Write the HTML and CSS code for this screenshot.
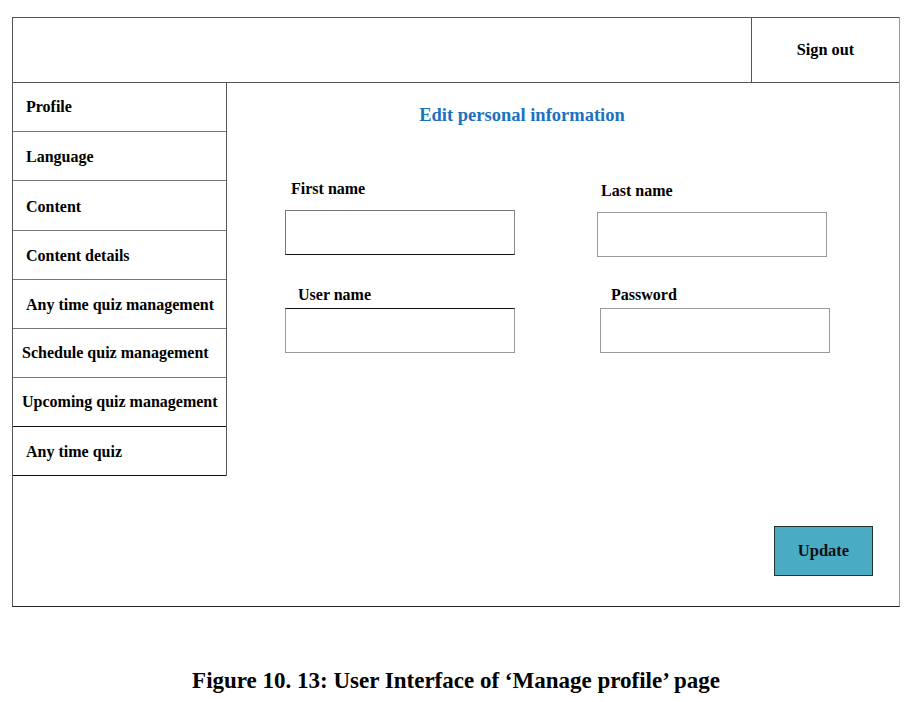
FILE: index.html
```html
<!DOCTYPE html>
<html>
<head>
<meta charset="utf-8">
<link rel="stylesheet" href="styles.css">
</head>
<body>
<div class="frame">
  <div class="header">
    <div class="header-space"></div>
    <div class="signout">Sign out</div>
  </div>
  <div class="body">
    <nav class="sidebar">
      <div class="nav-item first">Profile</div>
      <div class="nav-item">Language</div>
      <div class="nav-item tall">Content</div>
      <div class="nav-item">Content details</div>
      <div class="nav-item">Any time quiz management</div>
      <div class="nav-item tight">Schedule quiz management</div>
      <div class="nav-item tight dark">Upcoming quiz management</div>
      <div class="nav-item dark">Any time quiz</div>
    </nav>
    <main class="content">
      <h1 class="title">Edit personal information</h1>
      <div class="form">
        <div class="field">
          <label class="label">First name</label>
          <div class="input dark-border"></div>
        </div>
        <div class="field shift">
          <label class="label">Last name</label>
          <div class="input"></div>
        </div>
        <div class="field row2">
          <label class="label indent">User name</label>
          <div class="input dark-top"></div>
        </div>
        <div class="field row2 right2">
          <label class="label indent">Password</label>
          <div class="input"></div>
        </div>
      </div>
      <div class="actions">
        <button class="update">Update</button>
      </div>
    </main>
  </div>
</div>
<p class="caption">Figure 10. 13: User Interface of ‘Manage profile’ page</p>
</body>
</html>
```

FILE: styles.css
```css
* { box-sizing: border-box; }
html, body { background: #fff; }
body {
  margin: 0;
  padding: 17px 0 0 12px;
  font-family: "Liberation Serif", "Times New Roman", serif;
  color: #000;
}
.frame {
  width: 888px;
  height: 590px;
  border: 1px solid #555;
  border-right-color: #999;
  border-bottom-color: #222;
  display: flex;
  flex-direction: column;
}
.header {
  height: 65px;
  display: flex;
  border-bottom: 1px solid #555;
}
.header-space { flex: 1; }
.signout {
  width: 148px;
  border-left: 1px solid #555;
  display: flex;
  align-items: center;
  justify-content: center;
  font-weight: bold;
  font-size: 16.3px;
  padding-top: 0;
}
.body {
  flex: 1;
  display: flex;
}
.sidebar {
  width: 214px;
  align-self: flex-start;
  border-right: 1px solid #555;
  display: flex;
  flex-direction: column;
}
.nav-item {
  height: 49px;
  border-bottom: 1px solid #777;
  display: flex;
  align-items: center;
  padding-left: 13px;
  font-weight: bold;
  font-size: 16px;
  padding-bottom: 0;
  padding-top: 1px;
}
.nav-item.first { align-items: flex-start; padding-top: 15px; }
.nav-item.tall { height: 50px; padding-top: 3px; }
.nav-item.tight { padding-left: 9px; padding-top: 0; }
.nav-item.dark { border-bottom-color: #111; }
.content {
  flex: 1;
  display: flex;
  flex-direction: column;
}
.title {
  margin: 22px 0 0 0;
  text-align: center;
  font-size: 18.5px;
  line-height: 21px;
  font-weight: bold;
  color: #1b72c0;
  padding-right: 82px;
}
.form {
  margin: 55px 0 0 58px;
  display: grid;
  grid-template-columns: 230px 233px;
  column-gap: 82px;
}
.field {
  display: flex;
  flex-direction: column;
}
.field.shift { margin-top: 2px; }
.field.row2 { margin-top: 30px; }
.field.right2 { padding-left: 3px; }
.label {
  font-weight: bold;
  font-size: 16px;
  line-height: 16px;
  margin: 0 0 13px 6px;
}
.field.shift .label { margin-left: 4px; }
.label.indent { margin-left: 13px; margin-bottom: 5px; }
.field.right2 .label { margin-left: 11px; }
.input {
  width: 230px;
  height: 45px;
  border: 1px solid #999;
}
.input.dark-border { border-color: #777 #888 #111 #777; }
.input.dark-top { border-top-color: #111; }
.actions {
  margin-top: auto;
  display: flex;
  justify-content: flex-end;
  padding: 0 26px 30px 0;
}
.update {
  width: 99px;
  height: 50px;
  background: #4aabc5;
  border: 1px solid #233;
  font-family: "Liberation Serif", "Times New Roman", serif;
  font-weight: bold;
  font-size: 16.5px;
  color: #111;
  padding: 0;
}
.caption {
  margin: 62px 0 0 0;
  width: 888px;
  text-align: center;
  font-weight: bold;
  font-size: 23px;
  line-height: 24px;
}
```
